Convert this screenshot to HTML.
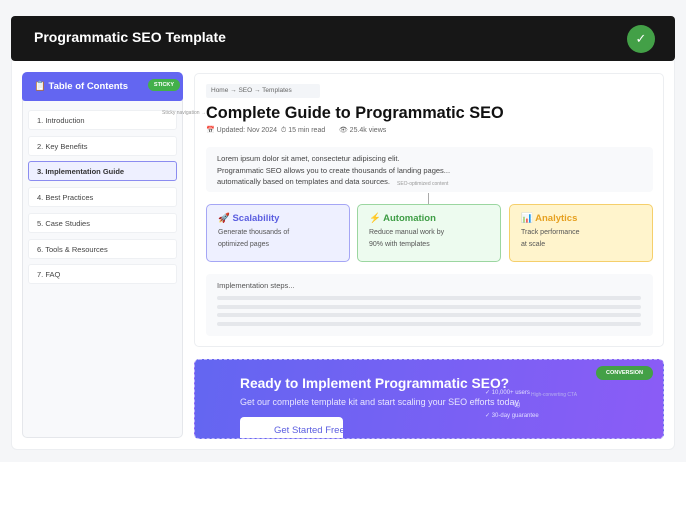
<!DOCTYPE html><html><head><meta charset="utf-8"><style>
*{box-sizing:border-box;margin:0;padding:0}
body{width:686px;height:523px;background:#fff;font-family:"Liberation Sans",sans-serif;position:relative;overflow:hidden}
.a{position:absolute}
.bg{left:0;top:0;width:686px;height:462px;background:#f5f6f8}
.card{left:11px;top:56px;width:664px;height:394px;background:#fff;border-radius:6px;border:1px solid #eceef1}
.hdr{left:11px;top:16px;width:664px;height:45px;background:#171717;border-radius:4px}
.side{left:22px;top:72px;width:161px;height:366px;background:#f8f9fb;border:1px solid #e5e7eb;border-radius:5px}
.sh{left:22px;top:72px;width:161px;height:29px;background:#6366f1;border-radius:5px 5px 3px 3px;color:#fff;font-weight:bold;font-size:9.5px;padding:9px 0 0 12px}
.it{left:28px;width:149px;height:20px;background:#fff;border:1px solid #eef0f3;border-radius:3px;font-size:7.5px;color:#444;padding:5px 0 0 8px}
.main{left:194px;top:73px;width:470px;height:274px;background:#fff;border:1px solid #eceef1;border-radius:5px}
.fc{top:204px;width:144px;height:58px;border-radius:5px;padding:8px 0 0 11px;font-size:7px;color:#555;line-height:12px}
.fc b{font-size:9.5px;display:block;margin-bottom:2px}
.bar{left:217px;width:424px;height:4px;background:#e5e7eb;border-radius:2px}
</style></head><body>
<div class="a bg"></div>
<div class="a card"></div>
<div class="a hdr"><div class="a" style="left:23px;top:13px;color:#fff;font-weight:bold;font-size:14px">Programmatic SEO Template</div>
<div class="a" style="left:616px;top:9px;width:28px;height:28px;border-radius:50%;background:#43a047;color:#fff;font-size:13px;text-align:center;line-height:28px">✓</div></div>
<div class="a side"></div>
<div class="a sh">📋 Table of Contents</div>
<div class="a" style="left:148px;top:79px;width:32px;height:12px;background:#43b04a;border-radius:6px;color:#fff;font-size:5.5px;font-weight:bold;text-align:center;line-height:12px">STICKY</div>
<div class="a it" style="top:110px">1. Introduction</div>
<div class="a it" style="top:136px">2. Key Benefits</div>
<div class="a it" style="top:161px;background:#eef0ff;border:1.5px solid #8b8cf0;font-weight:bold;color:#333">3. Implementation Guide</div>
<div class="a it" style="top:187px">4. Best Practices</div>
<div class="a it" style="top:213px">5. Case Studies</div>
<div class="a it" style="top:239px">6. Tools &amp; Resources</div>
<div class="a it" style="top:264px">7. FAQ</div>
<div class="a main"></div>
<div class="a" style="left:162px;top:110px;font-size:5px;color:#999">Sticky navigation →</div>
<div class="a" style="left:206px;top:84px;width:114px;height:14px;background:#f3f5f8;border-radius:2px;font-size:6.5px;color:#666;padding:3px 0 0 5px">Home → SEO → Templates</div>
<div class="a" style="left:206px;top:104px;font-size:16.3px;font-weight:bold;color:#111">Complete Guide to Programmatic SEO</div>
<div class="a" style="left:206px;top:126px;font-size:7px;color:#666">📅 Updated: Nov 2024 &nbsp;⏱ 15 min read &nbsp;&nbsp;&nbsp;&nbsp;&nbsp;&nbsp;👁 25.4k views</div>
<div class="a" style="left:206px;top:147px;width:447px;height:45px;background:#f8f9fb;border-radius:4px;font-size:7.5px;color:#444;line-height:11.7px;padding:6px 0 0 11px">Lorem ipsum dolor sit amet, consectetur adipiscing elit.<br>Programmatic SEO allows you to create thousands of landing pages...<br>automatically based on templates and data sources.</div>
<div class="a" style="left:397px;top:181px;font-size:5px;color:#999">SEO-optimized content</div>
<div class="a" style="left:428px;top:193px;width:1px;height:12px;background:#aaa"></div>
<div class="a fc" style="left:206px;background:#eef0ff;border:1px solid #a5a6f5"><b style="color:#5b5ee0">🚀 Scalability</b>Generate thousands of<br>optimized pages</div>
<div class="a fc" style="left:357px;background:#edfbef;border:1px solid #9bd6a0"><b style="color:#3e9d45">⚡ Automation</b>Reduce manual work by<br>90% with templates</div>
<div class="a fc" style="left:509px;background:#fff4cc;border:1px solid #f5cf6b"><b style="color:#e6a020">📊 Analytics</b>Track performance<br>at scale</div>
<div class="a" style="left:206px;top:274px;width:447px;height:62px;background:#f8f9fb;border-radius:4px;font-size:7.5px;color:#555;padding:7px 0 0 11px">Implementation steps...</div>
<div class="a bar" style="top:296px"></div><div class="a bar" style="top:305px"></div><div class="a bar" style="top:313px"></div><div class="a bar" style="top:322px"></div>
<div class="a" style="left:194px;top:359px;width:470px;height:80px;background:linear-gradient(100deg,#6366f1,#8b5cf6);border:1px dashed #b9b4f8;border-radius:5px;overflow:hidden">
<div class="a" style="left:45px;top:16px;color:#fff;font-weight:bold;font-size:13.8px">Ready to Implement Programmatic SEO?</div>
<div class="a" style="left:45px;top:37px;color:#e8e6ff;font-size:9px">Get our complete template kit and start scaling your SEO efforts today</div>
<div class="a" style="left:45px;top:57px;width:103px;height:30px;background:#fff;border-radius:4px;color:#5b5ee0;font-size:9.5px;padding:8px 0 0 34px;white-space:nowrap;overflow:hidden">Get Started Free</div>
<div class="a" style="left:290px;top:28px;color:#e0dcff;font-size:6px;line-height:11.5px">✓ 10,000+ users<br>&nbsp;&nbsp;&nbsp;&nbsp;&nbsp;&nbsp;&nbsp;&nbsp;&nbsp;&nbsp;&nbsp;&nbsp;&nbsp;&nbsp;&nbsp;&nbsp;&nbsp;ng<br>✓ 30-day guarantee</div>
<div class="a" style="left:336px;top:32px;color:#b7b0ee;font-size:5px">High-converting CTA</div>
<div class="a" style="left:401px;top:6px;width:57px;height:14px;background:#43a047;border-radius:7px;color:#fff;font-size:5.5px;font-weight:bold;text-align:center;line-height:14px">CONVERSION</div>
</div>
</body></html>
